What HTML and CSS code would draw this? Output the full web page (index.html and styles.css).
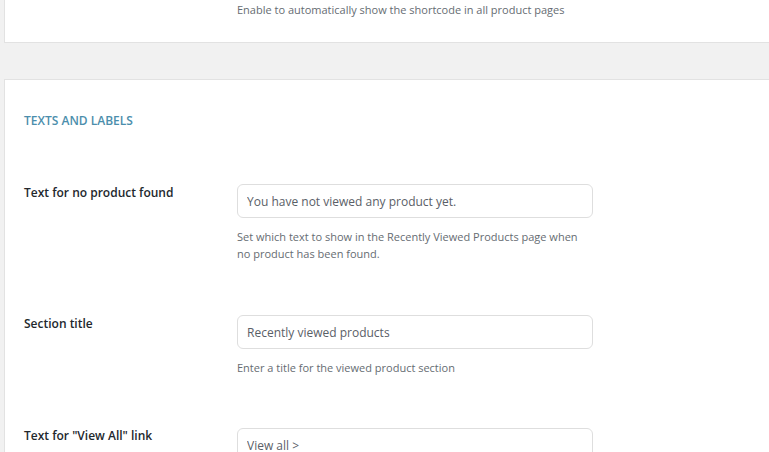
FILE: index.html
```html
<!DOCTYPE html>
<html>
<head>
<meta charset="utf-8">
<link rel="stylesheet" href="styles.css">
</head>
<body>
<div class="page">
  <div class="card card-top">
    <div class="row row-top">
      <div class="label"></div>
      <div class="field">
        <p class="help">Enable to automatically show the shortcode in all product pages</p>
      </div>
    </div>
  </div>
  <div class="card card-main">
    <h2 class="section-title">TEXTS AND LABELS</h2>
    <div class="row row-1">
      <div class="label">Text for no product found</div>
      <div class="field">
        <input class="input" type="text" value="You have not viewed any product yet.">
        <p class="help">Set which text to show in the Recently Viewed Products page when<br>no product has been found.</p>
      </div>
    </div>
    <div class="row row-2">
      <div class="label">Section title</div>
      <div class="field">
        <input class="input" type="text" value="Recently viewed products">
        <p class="help">Enter a title for the viewed product section</p>
      </div>
    </div>
    <div class="row row-3">
      <div class="label">Text for "View All" link</div>
      <div class="field">
        <input class="input" type="text" value="View all &gt;">
      </div>
    </div>
  </div>
</div>
</body>
</html>
```

FILE: styles.css
```css
html, body {
  margin: 0;
  padding: 0;
  background: #f1f1f1;
  overflow: hidden;
}
body {
  font-family: "Open Sans", "Noto Sans", sans-serif;
  color: #3c434a;
  width: 769px;
  height: 452px;
}
.page {
  padding-left: 4px;
  height: 452px;
  display: flex;
  flex-direction: column;
}
.card {
  background: #fff;
  border: 1px solid #e2e2e2;
  border-right: none;
  box-sizing: border-box;
}
.card-top {
  border-top: none;
  height: 43px;
  flex: none;
}
.row-top {
  display: flex;
}
.row-top .help {
  margin: 0;
  padding-top: 1px;
}
.card-main {
  margin-top: 36px;
  flex: 1;
  border-bottom: none;
  padding-left: 19px;
  overflow: hidden;
}
.section-title {
  margin: 0;
  padding-top: 33px;
  font-size: 12px;
  font-weight: 600;
  color: #4b8eac;
  line-height: 16px;
}
.row {
  display: flex;
}
.label {
  width: 213px;
  flex: none;
  font-size: 12px;
  font-weight: 600;
  color: #23282d;
  line-height: 16px;
}
.row-top .label {
  width: 232px;
}
.field {
  width: 356px;
}
.input {
  display: block;
  box-sizing: border-box;
  width: 356px;
  height: 34px;
  border: 1px solid #dedede;
  border-radius: 6px;
  padding: 0 9px;
  font-family: inherit;
  font-size: 12px;
  color: #5a6067;
  background: #fff;
  margin: 0;
  outline: none;
}
.help {
  margin: 10px 0 0;
  font-size: 11px;
  line-height: 17px;
  color: #666c72;
}
.row-1 {
  margin-top: 55px;
}
.row-1 .label { padding-top: 1px; }
.row-2 {
  margin-top: 53px;
}
.row-2 .label { padding-top: 1px; }
.row-3 {
  margin-top: 52px;
}
```
